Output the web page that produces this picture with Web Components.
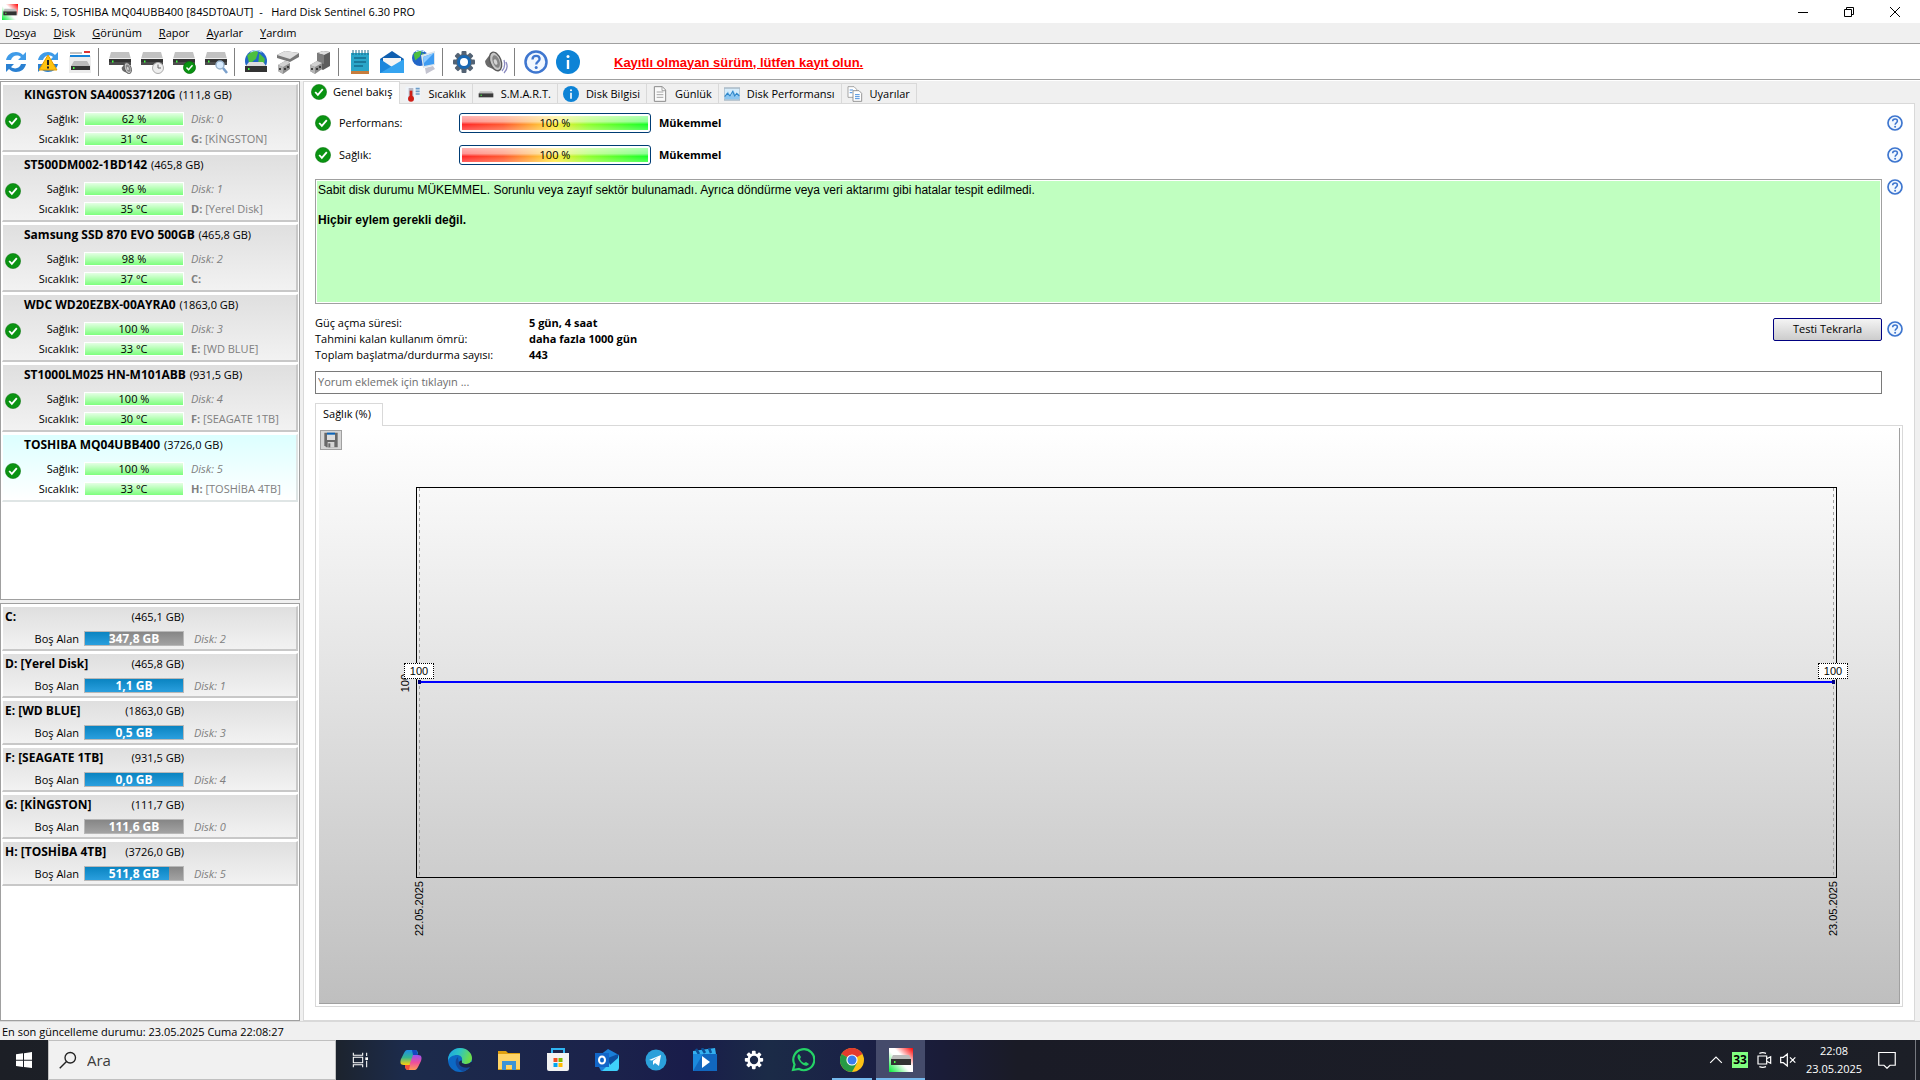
<!DOCTYPE html>
<html lang="tr">
<head>
<meta charset="utf-8">
<title>Hard Disk Sentinel</title>
<style>
    html, body {
        margin: 0;
        height: 100%;
    }

    body {
        --ui-face: #f0f0f0;
        --ui-line: #d9d9d9;
        --ui-shadow: #a0a0a0;
        display: flex;
        flex-direction: column;
        background: var(--ui-face);
        color: #000;
        font: 11px/16px "Open Sans", "Noto Sans", sans-serif;
        overflow: hidden;
    }

    main {
        flex: 1;
        min-height: 0;
        display: grid;
        grid-template-columns: 300px minmax(0, 1fr);
        gap: 3px;
        padding-right: 5px;
    }

    .side {
        display: grid;
        grid-template-rows: 31fr 25fr;
        gap: 3px;
        min-height: 0;
    }
</style>
</head>
<body>

<template id="hds-titlebar-template">
    <style>
        :host {
            display: flex;
            align-items: center;
            height: 23px;
            padding: 0 2px;
            background: #fff;
        }

        .text {
            flex: 1;
            margin-left: 5px;
            white-space: pre;
        }

        button {
            width: 46px;
            height: 23px;
            padding: 0;
            border: 0;
            background: none;
        }

        svg {
            display: block;
            margin: 0 auto;
        }
    </style>
    <hds-icon name="app" size="16"></hds-icon>
    <span class="text"><slot></slot></span>
    <button aria-label="Simge durumuna küçült"><svg width="12" height="12" stroke="#000"><path d="M1 6.5h10"/></svg></button>
    <button aria-label="Önceki boyut"><svg width="12" height="12" fill="none" stroke="#000"><path d="M1.500 3.500h7v7h-7zM3.500 3.500v-2h7v7h-2"/></svg></button>
    <button aria-label="Kapat"><svg width="12" height="12" stroke="#000"><path d="M1 1l10 10M11 1L1 11"/></svg></button>
</template>

<template id="hds-menubar-template">
    <style>
        :host {
            display: flex;
            gap: 17px;
            height: 20px;
            padding-left: 5px;
            border-bottom: 1px solid var(--ui-shadow);
        }

        ::slotted(button) {
            padding: 0;
            border: 0;
            background: none;
            font: inherit;
        }
    </style>
    <slot></slot>
</template>

<template id="hds-toolbar-template">
    <style>
        :host {
            display: flex;
            align-items: center;
            height: 35px;
            background: #fff;
            border-bottom: 1px solid var(--ui-shadow);
            box-shadow: 0 1px #fff;
            margin-bottom: 1px;
        }

        button {
            width: 32px;
            height: 32px;
            padding: 4px;
            border: 0;
            background: none;
        }

        .sep {
            width: 1px;
            height: 28px;
            margin: 0 5px 0 2px;
            background: #808080;
        }

        ::slotted(a) {
            margin-left: 30px;
            padding-top: 2px;
            color: #f00;
            font: bold 13px/16px "Liberation Sans", Arial, sans-serif;
        }
    </style>
    <div id="buttons" style="display: contents"></div>
    <slot></slot>
</template>

<template id="disk-card-template">
    <style>
        :host {
            display: block;
            box-sizing: border-box;
            height: 68px;
            margin: 2px 1px 0;
            border: 1px solid #fff;
            border-right: 2px solid #c8c8c8;
            border-bottom: 2px solid #c8c8c8;
            background: linear-gradient(#dfdfdf, #f2f2f2);
        }

        :host([selected]) {
            background: linear-gradient(#dcffff, #fff);
            border-right-color: #dfe5e5;
            border-bottom-color: #dfe5e5;
        }

        .title {
            margin-left: 21px;
            line-height: 20px;
            white-space: nowrap;
        }

        .title b {
            font-size: 12px;
            margin-right: 1px;
        }

        .body {
            display: grid;
            grid-template-columns: 16px 58px 105px 1fr;
            grid-auto-rows: 20px;
            align-items: center;
            padding: 4px 0 0 2px;
        }

        hds-icon {
            grid-row: span 2;
            align-self: start;
            margin-top: 4px;
        }

        .label {
            text-align: right;
        }

        .bar {
            height: 12px;
            margin-left: 5px;
            border: 1px solid #fff;
            background: linear-gradient(#e4ffe4, #7dff7d);
            text-align: center;
            line-height: 12px;
        }

        .note {
            margin-left: 7px;
            color: #808080;
            white-space: nowrap;
        }
    </style>
    <div class="title"><b id="model"></b> <span id="size"></span></div>
    <div class="body">
        <hds-icon name="ok" size="16"></hds-icon>
        <span class="label">Sağlık:</span>
        <div class="bar" id="health"></div>
        <i class="note" id="disk"></i>
        <span class="label">Sıcaklık:</span>
        <div class="bar" id="temp"></div>
        <span class="note"><b id="letter"></b> <span id="volume"></span></span>
    </div>
</template>

<template id="drive-card-template">
    <style>
        :host {
            display: block;
            box-sizing: border-box;
            height: 45px;
            margin: 2px 1px 0;
            border: 1px solid #fff;
            border-right: 2px solid #c8c8c8;
            border-bottom: 2px solid #c8c8c8;
            background: linear-gradient(#dfdfdf, #f2f2f2);
        }

        .title {
            display: flex;
            justify-content: space-between;
            width: 179px;
            margin-left: 2px;
            line-height: 20px;
            white-space: nowrap;
        }

        .title b {
            font-size: 12px;
        }

        .row {
            display: flex;
            align-items: center;
            height: 24px;
        }

        .label {
            width: 76px;
            text-align: right;
        }

        .bar {
            width: 98px;
            height: 13px;
            margin: 0 10px 0 5px;
            border: 1px solid #b8b8b8;
            background:
                linear-gradient(#0a84c1, #2a9fde) 0 0 / var(--used) 100% no-repeat,
                linear-gradient(#868686, #a2a2a2);
            color: #fff;
            font: bold 12px/13px "Open Sans", "Noto Sans", sans-serif;
            text-align: center;
        }

        i {
            color: #808080;
        }
    </style>
    <div class="title"><b id="name"></b><span id="size"></span></div>
    <div class="row">
        <span class="label">Boş Alan</span>
        <div class="bar" id="free"></div>
        <i id="disk"></i>
    </div>
</template>

<template id="list-pane-template">
    <style>
        :host {
            display: block;
            box-sizing: border-box;
            min-height: 0;
            overflow: hidden;
            background: #fff;
            border: 1px solid var(--ui-shadow);
        }
    </style>
    <slot></slot>
</template>

<template id="hds-tabs-template">
    <style>
        :host {
            display: flex;
            flex-direction: column;
            min-height: 0;
        }

        .tabs {
            display: flex;
            align-items: flex-end;
            height: 22px;
        }

        .tabs> ::slotted(button) {
            display: flex;
            align-items: center;
            gap: 7px;
            height: 20px;
            padding: 0 6px 0 5px;
            border: 1px solid var(--ui-line);
            border-left: 0;
            border-bottom: 0;
            background: var(--ui-face);
            font: inherit;
            white-space: nowrap;
        }

        .tabs> ::slotted(.active) {
            gap: 6px;
            height: 23px;
            margin-bottom: -1px;
            padding: 0 7px 2px 7px;
            border-left: 1px solid var(--ui-line);
            background: #fff;
            position: relative;
        }

        .content {
            flex: 1;
            min-height: 0;
            display: flex;
            flex-direction: column;
            background: #fff;
            border: 1px solid var(--ui-line);
        }
    </style>
    <div class="tabs"><slot name="tabs"></slot></div>
    <div class="content"><slot></slot></div>
</template>

<template id="status-meter-template">
    <style>
        :host {
            display: flex;
            align-items: center;
            flex: 1;
            height: 20px;
        }

        .label {
            width: 120px;
            margin-left: 8px;
        }

        .meter {
            box-sizing: border-box;
            width: 192px;
            height: 20px;
            padding: 2px;
            border: 1px solid #003c74;
            border-radius: 3px;
        }

        .fill {
            height: 14px;
            background:
                linear-gradient(rgba(255, 255, 255, .65), rgba(255, 255, 255, .5) 40%, rgba(255, 255, 255, 0) 60%, rgba(255, 255, 255, .25)),
                linear-gradient(90deg, #ff2828, #ff5a30 22%, #ffe838 50%, #90ff30 68%, #18ff28);
            line-height: 14px;
            text-align: center;
        }

        b {
            margin-left: 8px;
        }
    </style>
    <hds-icon name="ok" size="16"></hds-icon>
    <span class="label"></span>
    <div class="meter"><div class="fill"></div></div>
    <b></b>
</template>

<template id="disk-overview-template">
    <style>
        :host {
            display: flex;
            flex-direction: column;
            flex: 1;
            min-height: 0;
            padding: 9px 11px 13px;
        }

        .row {
            display: flex;
            align-items: flex-start;
            gap: 5px;
        }

        .meters {
            align-items: center;
            margin-bottom: 12px;
        }

        .help {
            width: 16px;
            height: 16px;
            padding: 0;
            border: 0;
            background: none;
        }

        .report + .help {
            margin-top: 2px;
        }

        .report {
            flex: 1;
            box-sizing: border-box;
            height: 125px;
            margin-top: 2px;
            padding: 3px 2px;
            border: 1px solid var(--ui-shadow);
            box-shadow: inset 0 0 0 1px #fff;
            background: #c0ffc0;
            font: 12px/15px "Liberation Sans", Arial, sans-serif;
        }

        .report p {
            margin: 0 0 15px;
        }

        .facts {
            align-items: center;
            padding: 11px 0 8px;
        }

        dl {
            flex: 1;
            display: grid;
            grid-template-columns: 214px 1fr;
            margin: 0;
        }

        dd {
            margin: 0;
            font-weight: bold;
        }

        .retest {
            width: 109px;
            height: 23px;
            margin-bottom: 20px;
            border: 1px solid #000080;
            border-radius: 2px;
            background: linear-gradient(#f4f4f4, #ccc);
            font: inherit;
        }

        .facts .help {
            margin-bottom: 20px;
        }

        .comment {
            box-sizing: border-box;
            height: 23px;
            margin: 0 21px 9px 0;
            padding: 0 2px 2px;
            border: 1px solid #7a7a7a;
            font: inherit;
        }

        .comment::placeholder {
            color: #6d6d6d;
            opacity: 1;
        }

        hds-tabs {
            flex: 1;
        }

        .health {
            padding: 0 11px 3px 7px;
        }
    </style>
    <div class="row meters">
        <status-meter label="Performans:" value="100 %" verdict="Mükemmel"></status-meter>
        <button class="help" aria-label="Yardım"><hds-icon name="help" size="16"></hds-icon></button>
    </div>
    <div class="row meters">
        <status-meter label="Sağlık:" value="100 %" verdict="Mükemmel"></status-meter>
        <button class="help" aria-label="Yardım"><hds-icon name="help" size="16"></hds-icon></button>
    </div>
    <div class="row">
        <div class="report">
            <p>Sabit disk durumu MÜKEMMEL. Sorunlu veya zayıf sektör bulunamadı. Ayrıca döndürme veya veri aktarımı gibi hatalar tespit edilmedi.</p>
            <b>Hiçbir eylem gerekli değil.</b>
        </div>
        <button class="help" aria-label="Yardım"><hds-icon name="help" size="16"></hds-icon></button>
    </div>
    <div class="row facts">
        <dl>
            <dt>Güç açma süresi:</dt><dd>5 gün, 4 saat</dd>
            <dt>Tahmini kalan kullanım ömrü:</dt><dd>daha fazla 1000 gün</dd>
            <dt>Toplam başlatma/durdurma sayısı:</dt><dd>443</dd>
        </dl>
        <button class="retest">Testi Tekrarla</button>
        <button class="help" aria-label="Yardım"><hds-icon name="help" size="16"></hds-icon></button>
    </div>
    <input class="comment" aria-label="Yorum" placeholder="Yorum eklemek için tıklayın ...">
    <hds-tabs>
        <button slot="tabs" class="active health">Sağlık (%)</button>
        <health-chart from="22.05.2025" to="23.05.2025" value="100"></health-chart>
    </hds-tabs>
</template>

<template id="health-chart-template">
    <style>
        :host {
            display: flex;
            flex: 1;
            box-sizing: border-box;
            margin: 2px 2px 2px 3px;
            padding: 59px 62px 125px 97px;
            border-right: 1px solid var(--ui-shadow);
            border-bottom: 1px solid var(--ui-shadow);
            background: linear-gradient(#fff, #bfbfbf);
            font: 11px/14px "Liberation Sans", Arial, sans-serif;
            position: relative;
        }

        .save {
            position: absolute;
            left: 1px;
            top: 2px;
            width: 22px;
            height: 20px;
            padding: 1px 2px;
            border: 1px solid #a0a0a0;
            background: #d6d6d6;
        }

        .plot {
            flex: 1;
            border: 1px solid #000;
            position: relative;
        }

        .mark {
            position: absolute;
            top: 0;
            bottom: 0;
            width: 1px;
            background: repeating-linear-gradient(#a0a0a0 0 3px, transparent 3px 6px);
        }

        .first { left: 2px; }
        .last { right: 2px; }

        .line {
            position: absolute;
            left: 2px;
            right: 2px;
            top: 50%;
            height: 2px;
            margin-top: -2px;
            background: #00f;
        }

        /* small square at each measured day */
        .mark::before {
            content: "";
            position: absolute;
            left: -1px;
            top: 50%;
            width: 3px;
            height: 4px;
            margin-top: -3px;
            background: #000080;
        }

        .value {
            position: absolute;
            left: -15px;
            bottom: 50%;
            box-sizing: border-box;
            width: 30px;
            height: 16px;
            margin-bottom: 4px;
            border: 1px dotted #000;
            background: #fff;
            text-align: center;
        }

        .date, .axis {
            position: absolute;
            writing-mode: vertical-rl;
            transform: rotate(180deg);
        }

        .date {
            left: -7px;
            top: 100%;
            margin-top: 4px;
        }

        .axis {
            left: -19px;
            top: 50%;
            margin-top: -9px;
        }
    </style>
    <button class="save" aria-label="Kaydet"><hds-icon name="save" size="16"></hds-icon></button>
    <div class="plot">
        <span class="axis"></span>
        <div class="line"></div>
        <div class="mark first"><span class="value"></span><span class="date" id="from"></span></div>
        <div class="mark last"><span class="value"></span><span class="date" id="to"></span></div>
    </div>
</template>

<template id="task-bar-template">
    <style>
        :host {
            display: flex;
            height: 40px;
            background: linear-gradient(90deg, #1c1f26 0, #1c2229 17%, #1c2b4b 21%, #1b224b 32%, #191c4a 36%, #1b2b47 40%, #1a2046 45%, #1a1c38 49%, #1a1b26 53%, #1c1f27);
            color: #fff;
            font-size: 11px;
        }

        button {
            width: 49px;
            padding: 0;
            border: 0;
            box-sizing: border-box;
            background: none;
        }

        button hds-icon {
            margin: 0 auto;
        }

        .start {
            width: 48px;
        }

        label {
            display: flex;
            align-items: center;
            gap: 10px;
            box-sizing: border-box;
            width: 288px;
            padding-left: 10px;
            border: 1px solid #c0c0c0;
            background: #f1f1f1;
        }

        input {
            flex: 1;
            min-width: 0;
            padding: 0;
            border: 0;
            background: none;
            font: 15px/20px "Open Sans", "Noto Sans", sans-serif;
        }

        input::placeholder {
            color: #3c3c3c;
            opacity: 1;
        }

        .view {
            width: 48px;
            margin-right: 2px;
        }

        .open {
            background: linear-gradient(#76b9ed, #76b9ed) 50% 100% / 40px 2px no-repeat;
        }

        .current {
            background: linear-gradient(#76b9ed, #76b9ed) 50% 100% / 100% 2px no-repeat #454b6b;
        }

        .tray {
            display: flex;
            align-items: center;
            margin-left: auto;
        }

        .tray button {
            width: 24px;
            height: 40px;
        }

        .tray .badge {
            width: 16px;
            height: 16px;
            margin: 0 4px;
            background: #80ff80;
            color: #000;
            font: bold 12px/16px "Open Sans", "Noto Sans", sans-serif;
            text-align: center;
        }

        .clock {
            width: 68px;
            line-height: 18px;
            text-align: center;
        }

        .tray .notes {
            width: 38px;
            margin-right: 9px;
        }

        .desktop {
            width: 4px;
            height: 40px;
            border-left: 1px solid #767980;
        }
    </style>
    <button class="start" aria-label="Başlat"><hds-icon name="windows" size="16"></hds-icon></button>
    <label><hds-icon name="search" size="18"></hds-icon><input aria-label="Ara" placeholder="Ara"></label>
    <div id="apps" style="display: contents"></div>
    <div class="tray">
        <button aria-label="Gizli simgeler"><hds-icon name="chevron" size="14"></hds-icon></button>
        <span class="badge">33</span>
        <button aria-label="Kamera"><hds-icon name="camera" size="16"></hds-icon></button>
        <button aria-label="Ses"><hds-icon name="muted" size="16"></hds-icon></button>
        <div class="clock">22:08<br>23.05.2025</div>
        <button class="notes" aria-label="Bildirimler"><hds-icon name="notes" size="18"></hds-icon></button>
        <span class="desktop"></span>
    </div>
</template>

<template id="status-line-template">
    <style>
        :host {
            display: block;
            height: 18px;
            padding-left: 2px;
            border-top: 1px solid var(--ui-line);
            line-height: 19px;
        }
    </style>
    <slot></slot>
</template>

<script>
    (() => {
        // shared pieces of the drive icons
        const led = (x, y) => `<rect x="${x}" y="${y}" width="1.500" height="2" fill="#4f4"/>`;
        const drive = `<path d="M3 2h18l2 7H1z" fill="#c2c2c2"/><path d="M1 8h22v1H1z" fill="#eee"/><path d="M1 9h22v6H1z" fill="#333"/><path d="M1 12h22v3H1z" fill="#4c4c4c"/>${led(4, 10.5)}`;
        const check = (x, y, r) => `<circle cx="${x}" cy="${y}" r="${r}" fill="#0a9312" stroke="#06740c" stroke-width=".8"/><path d="M${x - r * 0.5} ${y}l${r * 0.35} ${r * 0.38}L${x + r * 0.5} ${y - r * 0.38}" fill="none" stroke="#fff" stroke-width="${r * 0.24}"/>`;
        const arrows = `<path d="M2 10C3 5 7 2 12 2c3 0 5 1 7 3l3-3v8h-8l3-3c-4-3-9-1-10 3z" fill="#3f9be8"/><path d="M22 14c-1 5-5 8-10 8-3 0-5-1-7-3l-3 3v-8h8l-3 3c4 3 9 1 10-3z" fill="#2a80d2"/>`;
        const globe = (x, y, r) => `<circle cx="${x}" cy="${y}" r="${r}" fill="#2266c8"/><path d="M${x - r * 0.8} ${y - r * 0.5}q${r * 0.6} ${-r * 0.6} ${r} ${-r * 0.3}l${-r * 0.2} ${r * 0.6} ${-r * 0.6} ${r * 0.5}zM${x + r * 0.3} ${y - r * 0.7}l${r * 0.5} ${r * 0.5} ${-r * 0.1} ${r * 0.7} ${-r * 0.5} ${-r * 0.3}z" fill="#4cbf3f"/><path d="M${x - r * 0.5} ${y - r * 0.8}q${r * 0.5} ${-r * 0.3} ${r} 0" fill="none" stroke="#d8f4ff"/>`;
        const speaker = (x, y, s) => `<g transform="translate(${x} ${y}) scale(${s})"><path d="M1 9l3-4 7-4 4 16-3 1-7-3c-3-1-4-4-4-6z" fill="#6a6a6a"/><ellipse cx="10.500" cy="9.500" rx="5" ry="8.800" transform="rotate(-20 10.500 9.500)" fill="#c6c6c6" stroke="#5a5a5a" stroke-width="1.300"/><ellipse cx="11" cy="9.500" rx="3" ry="6" transform="rotate(-20 11 9.500)" fill="#858585"/><ellipse cx="10.500" cy="10" rx="1.500" ry="2.600" transform="rotate(-20 10.500 10)" fill="#d4d4d4"/></g>`;
        const gear = (color, hole) => `<g fill="${color}"><circle cx="12" cy="12" r="8"/>${[0, 45, 90, 135].map(a => `<rect x="9.500" y="1" width="5" height="22" rx="1" transform="rotate(${a} 12 12)"/>`).join('')}</g><circle cx="12" cy="12" r="5" fill="${hole}"/>`;
        const connector = `<path d="M2 15l7-4 5 2v6l-7 5-5-3z" fill="#8c8c8c"/><path d="M2 15l7-4 5 2-7 4z" fill="#d2d2d2"/><path d="M2 15l5 2v7l-5-3z" fill="#b4b4b4"/><path d="M4 18v2M9 18v2M12 16v2" stroke="#222" stroke-width="1.500"/>`;
        const help = `<circle cx="12" cy="12" r="10.500" fill="#f2f8ff" stroke="#3e76cf" stroke-width="2.500"/><path d="M8.500 9.500c0-2.300 1.500-3.600 3.600-3.600 2 0 3.500 1.200 3.500 3.100 0 2.700-3.400 2.700-3.400 5.500" fill="none" stroke="#3e76cf" stroke-width="2.300"/><circle cx="12.200" cy="17.600" r="1.500" fill="#3e76cf"/>`;
        const info = `<circle cx="12" cy="12" r="12" fill="#0d83d6"/><circle cx="12" cy="6.500" r="1.500" fill="#fff"/><path d="M12 10v9" stroke="#fff" stroke-width="2.400"/>`;

        const ICONS = {
            app: `<defs><linearGradient id="g" x2="1" y1="1" y2="0"><stop offset="0" stop-color="#0e3"/><stop offset=".45" stop-color="#fff"/><stop offset=".6" stop-color="#fff"/><stop offset="1" stop-color="#f00"/></linearGradient></defs><path d="M0 0h24v24H0z" fill="url(#g)"/><path d="M4 7h16l2 4H2z" fill="#bbb"/><path d="M2 11h20v6H2z" fill="#333"/>${led(5, 13)}`,
            ok: check(12, 12, 11.4),
            refresh: arrows,
            warn: `${arrows}<path d="M12 5l9 15H3z" fill="#ffc20e" stroke="#e59b00"/><path d="M12 10v5M12 16.500v2" stroke="#222" stroke-width="2"/>`,
            panel: `<path d="M1 1h22v22H1z" fill="#ececec"/><path d="M1 1h22v5H1z" fill="#fff"/><path d="M2 3h12" stroke="#888"/><path d="M16 2h6" stroke="#d33" stroke-width="2"/><path d="M2 6h20" stroke="#1683d8" stroke-width="2"/><path d="M6 11h13l3 5H3z" fill="#bbb"/><path d="M3 16h19v4H3z" fill="#333"/>${led(5, 17)}`,
            driveSound: drive + speaker(13, 12, 0.65),
            driveClock: `${drive}<circle cx="18" cy="18" r="5.500" fill="#eee" stroke="#aaa"/><path d="M18 14.500V18h3" fill="none" stroke="#666"/>`,
            driveOk: drive + check(17.5, 17.5, 6),
            driveFind: `${drive}<circle cx="16" cy="15" r="4" fill="#d8ecff" stroke="#9ab4cc" stroke-width="1.500"/><path d="M19 18l4 5" stroke="#7aa0cc" stroke-width="2.500"/>`,
            globeDrive: `${globe(12, 11, 11)}<path d="M5 12h14l4 5H1z" fill="#ddd"/><path d="M1 16h22v6H1z" fill="#333"/>${led(4, 18)}`,
            plugDrive: `${connector}<path d="M1 5l8-4 14 2v4l-9 5L1 8z" fill="#777"/><path d="M1 5l8-4 14 2-9 6z" fill="#dedede"/>`,
            plugDisk: `<path d="M9 3l6-2 7 1v14l-7 4-6-3z" fill="#5c5c5c"/><path d="M9 3l6-2 7 1-6 3z" fill="#ddd"/><path d="M9 3l7 2v9l-7-2z" fill="#7c7c7c"/>${connector}`,
            notepad: `<path d="M3 3h18v21H3z" fill="#2aa6c9"/><path d="M3 21h18v3H3z" fill="#c77d3c"/><path d="M5 0v5M8 0v5M11 0v5M14 0v5M17 0v5M20 0v5" stroke="#1a6c8c"/><path d="M6 8h12M6 12h12M6 16h9" stroke="#156c8d" stroke-width="1.500"/>`,
            mail: `<path d="M0 9l12-8 12 8v14H0z" fill="#0f5fb0"/><path d="M3 8h18v10H3z" fill="#f4f4f4"/><path d="M0 9l12 8-12 6z" fill="#1a86dc"/><path d="M24 9v14H0l14-8z" fill="#35a4f0"/>`,
            network: `${globe(8, 8, 8)}<path d="M13 18l8-2 2 3-9 5z" fill="#c4c4d0"/><path d="M9 5l14-4v14l-12 3z" fill="#dde6ee"/><path d="M11 7l11-4v11l-10 2z" fill="#3f9cf2"/><path d="M11 7l11-4-10 10z" fill="#8ccaff"/>`,
            settings: `${gear('#536273', '#0c64c0')}<circle cx="12" cy="12" r="4" fill="#fff"/><circle cx="12" cy="12" r="6" fill="none" stroke="#1769b5" stroke-width="2"/>`,
            sound: `${speaker(0, 1, 1.1)}<path d="M18 21q4-4 2-11M20 23q5-5 2-11" fill="none" stroke="#8a8ac0" stroke-width="1.300"/>`,
            help: help,
            info: info,
            thermo: `<path d="M1 1h22v22H1z" fill="#eef4fa"/><path d="M16 4h6M16 8h6M16 12h6" stroke="#6d9dc8" stroke-width="2.500"/><path d="M9 3v14" stroke="#b9b9c4" stroke-width="7"/><path d="M9 7v11" stroke="#cf2018" stroke-width="4"/><circle cx="9" cy="19" r="4.500" fill="#cf2018"/>`,
            smart: `<path d="M3 8h18l2 3H1z" fill="#c0c0c0"/><path d="M1 11h22v6H1z" fill="#3b3b3b"/>${led(4, 13)}`,
            page: `<path d="M3.500 1h12l5 5v17h-17z" fill="#fafafa" stroke="#8a8a8a" stroke-width="1.500"/><path d="M15 1v6h6M7 9h10M7 13h10M7 17h10" fill="none" stroke="#999" stroke-width="1.300"/>`,
            perf: `<path d="M0 3h24v18H0z" fill="#d5ecfb" stroke="#a9b9c6" stroke-width="2"/><path d="M1 17l5-9 4 8 4-10 4 9 3-4 2 3v6H1z" fill="#8cc6f0"/><path d="M1 16l4-5 4 4 4-7 3 7 3-4 4 4" fill="none" stroke="#2e86c9" stroke-width="1.600"/>`,
            pages: `<path d="M1.500 1h9l4 4v12h-13z" fill="#fff" stroke="#999" stroke-width="1.300"/><path d="M9 7h9l4 4v12H9z" fill="#fff" stroke="#888" stroke-width="1.300"/><path d="M4 6h5M4 10h4M12 13h7M12 16h7M12 19h7" stroke="#4a8fdc" stroke-width="1.500"/>`,
            save: `<path d="M2 1h20v22H5l-3-3z" fill="#696969"/><path d="M6 1h12v11H6z" fill="#ddd"/><path d="M6 1h12v3H6z" fill="#0a63b8"/><path d="M7 15h10v8H7z" fill="#d5d5d5"/><path d="M8 17h3v6H8z" fill="#696969"/>`,
            windows: `<path d="M0 3.500l10.500-1.500v9.500H0zM12 1.800L24 0v11.500H12zM0 13h10.500v9.400L0 21zM12 13h12v11l-12-1.600z" fill="#fff"/>`,
            search: `<circle cx="15" cy="9" r="7" fill="none" stroke="#222" stroke-width="1.800"/><path d="M10 14l-9 9" stroke="#222" stroke-width="1.800"/>`,
            taskview: `<path d="M2 1v4h14V1M2 23v-4h14v4M2 8h14v8H2zM22 1v5M22 13v10" fill="none" stroke="#fff" stroke-width="1.600"/><path d="M20 8h4v4h-4z" fill="#fff"/>`,
            copilot: `<defs><linearGradient id="a" x2="0" y2="1"><stop offset="0" stop-color="#1d8de8"/><stop offset=".5" stop-color="#36b690"/><stop offset="1" stop-color="#ffd20a"/></linearGradient><linearGradient id="b" x2="0" y2="1"><stop offset="0" stop-color="#9b52f0"/><stop offset=".5" stop-color="#ee4f9c"/><stop offset="1" stop-color="#ff9c55"/></linearGradient></defs><path d="M8 2h8c2 0 3 2 3 4h-4l-4 11H5c-4 0-4-3-3-6l3-6c1-2 2-3 3-3z" fill="url(#a)"/><path d="M13 2h3c2 0 2 2 3 5h-5z" fill="#1447c0"/><path d="M16 22H9c-2 0-3-2-3-4h4l4-11h5c4 0 4 3 3 6l-3 6c-1 2-2 3-3 3z" fill="url(#b)"/><path d="M6 17h5l-1 5c-3 0-4-2-4-5z" fill="#f4503a"/>`,
            edge: `<defs><linearGradient id="e" x2="1" y2=".3"><stop offset="0" stop-color="#1aa0e6"/><stop offset=".5" stop-color="#2dc4c4"/><stop offset="1" stop-color="#6cdd4c"/></linearGradient></defs><circle cx="12" cy="12" r="12" fill="#0c68c4"/><path d="M0 11C1 4 6 0 12 0c7 0 12 5 12 10 0 4-3 6-6 6-3 0-5-1-4-3 1-4-2-6-5-6-4 0-8 2-9 6z" fill="url(#e)"/><path d="M10 9c-4 3-3 11 4 14 4 0 7-2 8-5-5 3-12 0-12-9z" fill="#14489a"/><path d="M14 13c-1 2 1 3 4 3 2 0 4-1 5-2l1 0v5l-2 0c-6 2-11-1-11-4 0-2 2-3 3-2z" fill="#1b254a"/>`,
            folder: `<path d="M1 3h8l2 2h12v17H1z" fill="#e0a010"/><path d="M1 6h22v15H1z" fill="#ffd467"/><path d="M5 22v-9h14v9h-4v-5H9v5z" fill="#3d93d6"/>`,
            store: `<path d="M6 6V1h12v5" fill="none" stroke="#2fb4f2" stroke-width="2"/><path d="M1 5h22v16q0 2-2 2H3q-2 0-2-2z" fill="#f2f2f2"/><path d="M7.500 10h4v4h-4z" fill="#f25022"/><path d="M12.500 10h4v4h-4z" fill="#7fba00"/><path d="M7.500 15h4v4h-4z" fill="#00a4ef"/><path d="M12.500 15h4v4h-4z" fill="#ffb900"/>`,
            outlook: `<path d="M5 7l8-6 11 6v12l-2 4H6l-2-4z" fill="#1a7fd8"/><path d="M24 8v11q0 4-3 4H7l9-9z" fill="#3fd0fa"/><path d="M13 10l10-4v4l-8 7z" fill="#0c4fa0"/><path d="M0 5h14v14H0z" fill="#1266c8"/><ellipse cx="7" cy="12" rx="3" ry="3.600" fill="none" stroke="#fff" stroke-width="2"/>`,
            telegram: `<circle cx="12" cy="12" r="10.500" fill="#2ba0da"/><path d="M5 12l12-5-2 11-4-3-2 2v-4l5-4-6 3.500z" fill="#fff"/>`,
            video: `<path d="M0 3l22-3 1 6H0z" fill="#33b0f0"/><path d="M3 1l3 5M9 0l3 5M16 0l2 5" stroke="#0b4f96" stroke-width="2.500"/><path d="M0 6h24v17H0z" fill="#1167bf"/><path d="M0 6h10L0 23z" fill="#1b8ade"/><path d="M9 8l8 6-8 6z" fill="#fff"/>`,
            gear: gear('#fff', '#1b2848').replace(/width="5"/g, 'width="4.500"'),
            whatsapp: `<path d="M2 22l1.500-5.500A10.500 10.500 0 1 1 8 21z" fill="none" stroke="#25d366" stroke-width="2.200"/><path d="M8 6c-3 2-1 6 2 9s6 4 8 1l-3-2-2 1c-2-1-3-2-4-4l1-2z" fill="#25d366"/>`,
            chrome: `<circle cx="12" cy="12" r="12" fill="#fbc116"/><path d="M12 12L1.600 6A12 12 0 0 1 22.400 6z" fill="#e33b2e"/><path d="M1.600 6A12 12 0 0 0 12 24l5-9-5-3z" fill="#269a46"/><circle cx="12" cy="12" r="5.600" fill="#fff"/><circle cx="12" cy="12" r="4.500" fill="#3b7ded"/>`,
            chevron: `<path d="M2 17l10-10 10 10" fill="none" stroke="#fff" stroke-width="2"/>`,
            camera: `<path d="M3 6h13v12H3zM16 10l6-3v10l-6-3M5 2q5-2 10 0M5 22q5 2 10 0" fill="none" stroke="#fff" stroke-width="1.800"/>`,
            muted: `<path d="M1 8h4l6-5v18l-6-5H1zM15 8l8 8M23 8l-8 8" fill="none" stroke="#fff" stroke-width="1.800"/>`,
            notes: `<path d="M1 2h22v17h-7l-4 4-4-4H1z" fill="none" stroke="#fff" stroke-width="1.600"/>`
        };

        class HdsIcon extends HTMLElement {
            constructor() {
                super();
                this.attachShadow({ mode: "open" });
            }

            connectedCallback() {
                const size = this.getAttribute("size");
                this.shadowRoot.innerHTML = `
                    <style>:host { display: block; width: ${size}px; height: ${size}px; } svg { display: block; }</style>
                    <svg width="${size}" height="${size}" viewBox="0 0 24 24" aria-hidden="true">${ICONS[this.getAttribute("name")]}</svg>`;
            }
        }

        // clones <template id="[tag]-template"> into the shadow root
        class HdsElement extends HTMLElement {
            constructor() {
                super();
                const template = document.getElementById(this.localName + "-template");
                this._shadowRoot = this.attachShadow({ mode: "open" });
                this._shadowRoot.appendChild(template.content.cloneNode(true));
            }

            fill(...names) {
                names.forEach(name => {
                    this._shadowRoot.getElementById(name).textContent = this.getAttribute(name) || "";
                });
            }
        }

        class HdsToolbar extends HdsElement {
            connectedCallback() {
                const groups = ["refresh warn panel", "driveSound driveClock driveOk driveFind", "globeDrive plugDrive plugDisk", "notepad mail network", "settings sound", "help info"];
                this._shadowRoot.getElementById("buttons").innerHTML = groups
                    .map(group => group.split(" ")
                        .map(name => `<button aria-label="${name}"><hds-icon name="${name}" size="24"></hds-icon></button>`)
                        .join(""))
                    .join('<span class="sep"></span>');
            }
        }

        class DiskCard extends HdsElement {
            connectedCallback() {
                this.fill("model", "size", "health", "temp", "disk", "letter", "volume");
            }
        }

        class DriveCard extends HdsElement {
            connectedCallback() {
                this.fill("name", "size", "free", "disk");
                this._shadowRoot.getElementById("free").style.setProperty("--used", this.getAttribute("used") + "%");
            }
        }

        class StatusMeter extends HdsElement {
            connectedCallback() {
                this._shadowRoot.querySelector(".label").textContent = this.getAttribute("label");
                this._shadowRoot.querySelector(".fill").textContent = this.getAttribute("value");
                this._shadowRoot.querySelector("b").textContent = this.getAttribute("verdict");
            }
        }

        class HealthChart extends HdsElement {
            connectedCallback() {
                this.fill("from", "to");
                this._shadowRoot.querySelectorAll(".value, .axis").forEach(label => {
                    label.textContent = this.getAttribute("value");
                });
            }
        }

        class TaskBar extends HdsElement {
            connectedCallback() {
                const apps = ["taskview", "copilot", "edge", "folder", "store", "outlook", "telegram", "video", "gear", "whatsapp", "chrome", "app"];
                const state = { taskview: "view", chrome: "open", app: "current" };
                const small = { taskview: 16, gear: 20 };
                this._shadowRoot.getElementById("apps").innerHTML = apps
                    .map(name => `<button class="${state[name] || ""}" aria-label="${name}"><hds-icon name="${name}" size="${small[name] || 24}"></hds-icon></button>`)
                    .join("");
            }
        }

        window.customElements.define("hds-icon", HdsIcon);
        window.customElements.define("hds-toolbar", HdsToolbar);
        window.customElements.define("disk-card", DiskCard);
        window.customElements.define("drive-card", DriveCard);
        window.customElements.define("status-meter", StatusMeter);
        window.customElements.define("health-chart", HealthChart);
        window.customElements.define("task-bar", TaskBar);

        // these only wrap their slots
        ["hds-titlebar", "hds-menubar", "hds-tabs", "list-pane", "disk-overview", "status-line"].forEach(tag => {
            window.customElements.define(tag, class extends HdsElement {});
        });
    })();
</script>

<hds-titlebar>Disk: 5, TOSHIBA MQ04UBB400 [84SDT0AUT]  -   Hard Disk Sentinel 6.30 PRO</hds-titlebar>
<hds-menubar>
    <button>D<u>o</u>sya</button>
    <button><u>D</u>isk</button>
    <button><u>G</u>örünüm</button>
    <button><u>R</u>apor</button>
    <button><u>A</u>yarlar</button>
    <button><u>Y</u>ardım</button>
</hds-menubar>
<hds-toolbar><a href="#kayit">Kayıtlı olmayan sürüm, lütfen kayıt olun.</a></hds-toolbar>

<main>
    <div class="side">
        <list-pane>
            <disk-card model="KINGSTON SA400S37120G" size="(111,8 GB)" health="62 %" temp="31 °C" disk="Disk: 0" letter="G:" volume="[KİNGSTON]"></disk-card>
            <disk-card model="ST500DM002-1BD142" size="(465,8 GB)" health="96 %" temp="35 °C" disk="Disk: 1" letter="D:" volume="[Yerel Disk]"></disk-card>
            <disk-card model="Samsung SSD 870 EVO 500GB" size="(465,8 GB)" health="98 %" temp="37 °C" disk="Disk: 2" letter="C:"></disk-card>
            <disk-card model="WDC WD20EZBX-00AYRA0" size="(1863,0 GB)" health="100 %" temp="33 °C" disk="Disk: 3" letter="E:" volume="[WD BLUE]"></disk-card>
            <disk-card model="ST1000LM025 HN-M101ABB" size="(931,5 GB)" health="100 %" temp="30 °C" disk="Disk: 4" letter="F:" volume="[SEAGATE 1TB]"></disk-card>
            <disk-card selected model="TOSHIBA MQ04UBB400" size="(3726,0 GB)" health="100 %" temp="33 °C" disk="Disk: 5" letter="H:" volume="[TOSHİBA 4TB]"></disk-card>
        </list-pane>
        <list-pane>
            <drive-card name="C:" size="(465,1 GB)" free="347,8 GB" used="25" disk="Disk: 2"></drive-card>
            <drive-card name="D: [Yerel Disk]" size="(465,8 GB)" free="1,1 GB" used="100" disk="Disk: 1"></drive-card>
            <drive-card name="E: [WD BLUE]" size="(1863,0 GB)" free="0,5 GB" used="100" disk="Disk: 3"></drive-card>
            <drive-card name="F: [SEAGATE 1TB]" size="(931,5 GB)" free="0,0 GB" used="100" disk="Disk: 4"></drive-card>
            <drive-card name="G: [KİNGSTON]" size="(111,7 GB)" free="111,6 GB" used="0" disk="Disk: 0"></drive-card>
            <drive-card name="H: [TOSHİBA 4TB]" size="(3726,0 GB)" free="511,8 GB" used="86" disk="Disk: 5"></drive-card>
        </list-pane>
    </div>
    <hds-tabs>
        <button slot="tabs" class="active"><hds-icon name="ok" size="16"></hds-icon>Genel bakış</button>
        <button slot="tabs"><hds-icon name="thermo" size="16"></hds-icon>Sıcaklık</button>
        <button slot="tabs"><hds-icon name="smart" size="16"></hds-icon>S.M.A.R.T.</button>
        <button slot="tabs"><hds-icon name="info" size="16"></hds-icon>Disk Bilgisi</button>
        <button slot="tabs"><hds-icon name="page" size="16"></hds-icon>Günlük</button>
        <button slot="tabs"><hds-icon name="perf" size="16"></hds-icon>Disk Performansı</button>
        <button slot="tabs"><hds-icon name="pages" size="16"></hds-icon>Uyarılar</button>
        <disk-overview></disk-overview>
    </hds-tabs>
</main>
<status-line>En son güncelleme durumu: 23.05.2025 Cuma 22:08:27</status-line>
<task-bar></task-bar>

</body>
</html>
